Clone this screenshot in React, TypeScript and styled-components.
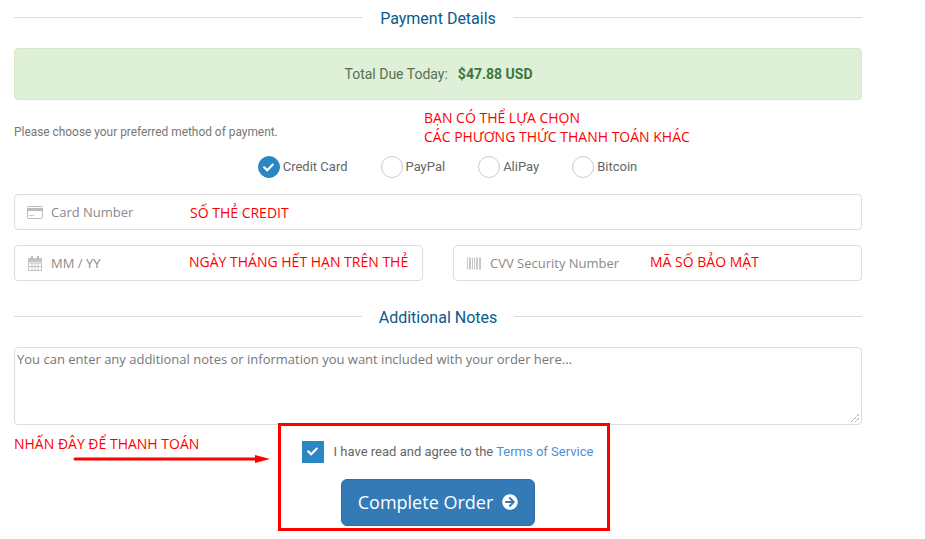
import styled, { createGlobalStyle } from "styled-components"
import { FaArrowCircleRight, FaCheck } from "react-icons/fa"

const GlobalStyle = createGlobalStyle`
    html, body {
        margin: 0;
        padding: 0;
        background: #fff;
        overflow: hidden;
    }
`
const Page = styled.div`
    position: relative;
    width: 925px;
    height: 539px;
    padding: 7px 0 0 14px;
    box-sizing: border-box;
    font-family: Roboto, "Liberation Sans", sans-serif;
    color: #777;
`
const Column = styled.div`
    width: 848px;
`
const SubHeading = styled.div<{ $mt?: number }>`
    display: flex;
    align-items: center;
    gap: 17px;
    height: 21px;
    margin-top: ${(p) => p.$mt ?? 0}px;
    font-size: 16px;
    color: #0a5a8c;
    &::before, &::after {
        content: "";
        flex: 1;
        height: 1px;
        background: #ddd;
    }
    span {
        padding-top: 2px;
    }
`
const TotalDue = styled.div`
    display: flex;
    justify-content: center;
    align-items: center;
    gap: 10px;
    height: 52px;
    margin-top: 20px;
    padding-left: 1px;
    box-sizing: border-box;
    background: #dff0d8;
    border: 1px solid #d6e9c6;
    border-radius: 4px;
    font-size: 14px;
    color: #56714f;
    b {
        color: #3c763d;
    }
`
const Hint = styled.p`
    margin: 25px 0 0;
    font-size: 11.9px;
    line-height: 14px;
    color: #777;
`
const Methods = styled.div`
    display: flex;
    justify-content: center;
    gap: 33px;
    margin: 17px 0 0 19px;
    height: 22px;
`
const Method = styled.label`
    display: flex;
    align-items: flex-start;
    gap: 3px;
    font-size: 13px;
    line-height: 22px;
    color: #666;
`
const Radio = styled.span<{ $on?: boolean }>`
    display: flex;
    align-items: center;
    justify-content: center;
    width: 22px;
    height: 22px;
    box-sizing: border-box;
    border-radius: 50%;
    border: 1px solid ${(p) => (p.$on ? "#2a87c4" : "#ccc")};
    background: ${(p) => (p.$on ? "#2a87c4" : "#fff")};
    color: #fff;
    font-size: 11px;
`
const Field = styled.div`
    display: flex;
    align-items: center;
    flex: 1;
    height: 36px;
    box-sizing: border-box;
    padding-left: 12px;
    border: 1px solid #ddd;
    border-radius: 4px;
    font-family: "Open Sans", sans-serif;
    font-size: 13px;
    color: #8a8a8a;
`
const FieldIcon = styled.svg`
    flex: none;
    width: 16px;
    height: 15px;
    margin-right: 8px;
`
const FieldRow = styled.div<{ $mt: number }>`
    display: flex;
    gap: 30px;
    margin-top: ${(p) => p.$mt}px;
`
const Notes = styled.div`
    position: relative;
    height: 78px;
    margin-top: 20px;
    box-sizing: border-box;
    padding: 2px 2px;
    border: 1px solid #ddd;
    border-radius: 4px;
    font-family: "Open Sans", sans-serif;
    font-size: 13px;
    line-height: 18px;
    color: #777;
`
const ResizeGrip = styled.svg`
    position: absolute;
    right: 1px;
    bottom: 1px;
`
const Highlight = styled.div`
    display: flex;
    flex-direction: column;
    align-items: center;
    width: 332px;
    height: 108px;
    box-sizing: border-box;
    margin: -2px 0 0 264px;
    padding-top: 14px;
    position: relative;
    border: 3px solid #f00;
`
const Agree = styled.div`
    display: flex;
    align-items: center;
    gap: 10px;
    height: 23px;
    margin-left: 7px;
    font-size: 13px;
    color: #666;
    a {
        color: #4a90d9;
    }
`
const Tick = styled.span`
    display: flex;
    align-items: center;
    justify-content: center;
    width: 22px;
    height: 22px;
    background: #2a87c4;
    color: #fff;
    font-size: 11px;
`
const OrderButton = styled.button`
    display: flex;
    align-items: center;
    justify-content: center;
    gap: 9px;
    width: 194px;
    height: 47px;
    margin: 16px 0 0 -12px;
    padding: 0 0 2px;
    background: #337ab7;
    border: 1px solid #2e6da4;
    border-radius: 6px;
    color: #fff;
    font-family: "Open Sans", sans-serif;
    font-size: 18px;
`
const Note = styled.div<{ $x: number; $y: number }>`
    position: absolute;
    left: ${(p) => p.$x}px;
    top: ${(p) => p.$y}px;
    font-family: "Open Sans", sans-serif;
    font-size: 14px;
    line-height: 19px;
    white-space: nowrap;
    color: #f00;
`
const Arrow = styled.svg`
    position: absolute;
    left: 72px;
    top: 452px;
`

export default function App() {
    return (
        <Page>
            <GlobalStyle />
            <Column>
                <SubHeading><span>Payment Details</span></SubHeading>
                <TotalDue>
                    <span>Total Due Today:</span>
                    <b>$47.88 USD</b>
                </TotalDue>
                <Hint>Please choose your preferred method of payment.</Hint>
                <Methods>
                    <Method><Radio $on><FaCheck /></Radio>Credit Card</Method>
                    <Method><Radio />PayPal</Method>
                    <Method><Radio />AliPay</Method>
                    <Method><Radio />Bitcoin</Method>
                </Methods>
                <FieldRow $mt={16}>
                    <Field>
                        <FieldIcon viewBox="0 0 16 15">
                            <rect x="0.5" y="1.5" width="15" height="12" rx="1" fill="#fff" stroke="#bbb" />
                            <rect x="1" y="3" width="14" height="3" fill="#bbb" />
                            <rect x="2" y="10" width="5" height="1" fill="#ccc" />
                        </FieldIcon>
                        Card Number
                    </Field>
                </FieldRow>
                <FieldRow $mt={15}>
                    <Field>
                        <FieldIcon viewBox="0 0 16 15">
                            <path d="M1.5 3.5h13v11h-13zM1.5 7h13M1.5 10.5h13M5 7v7.5M8 7v7.5M11 7v7.5" fill="none" stroke="#c4c4c4" />
                            <rect x="1" y="2" width="14" height="4" fill="#c4c4c4" />
                            <rect x="4" y="0" width="2" height="4" fill="#bbb" />
                            <rect x="10" y="0" width="2" height="4" fill="#bbb" />
                        </FieldIcon>
                        MM / YY
                    </Field>
                    <Field>
                        <FieldIcon viewBox="0 0 16 15">
                            <path d="M1 1.5h1v12H1zM3 1.5h2v12H3zM6 1.5h1v12H6zM8 1.5h1v12H8zM10 1.5h2v12h-2zM13 1.5h2v12h-2z" fill="#c8c8c8" />
                        </FieldIcon>
                        CVV Security Number
                    </Field>
                </FieldRow>
                <SubHeading $mt={25}><span>Additional Notes</span></SubHeading>
                <Notes>
                    You can enter any additional notes or information you want included with your order here...
                    <ResizeGrip width="10" height="10" viewBox="0 0 10 10">
                        <path d="M9 1 1 9M9 5 5 9" stroke="#666" strokeWidth="1" strokeDasharray="1 1" />
                    </ResizeGrip>
                </Notes>
                <Highlight>
                    <Agree>
                        <Tick><FaCheck /></Tick>
                        <span>I have read and agree to the <a>Terms of Service</a></span>
                    </Agree>
                    <OrderButton>Complete Order <FaArrowCircleRight size={16} /></OrderButton>
                </Highlight>
            </Column>
            <Note $x={424} $y={108}>BẠN CÓ THỂ LỰA CHỌN<br />CÁC PHƯƠNG THỨC THANH TOÁN KHÁC</Note>
            <Note $x={190} $y={203}>SỐ THẺ CREDIT</Note>
            <Note $x={189} $y={252}>NGÀY THÁNG HẾT HẠN TRÊN THẺ</Note>
            <Note $x={650} $y={252}>MÃ SỐ BẢO MẬT</Note>
            <Note $x={14} $y={434}>NHẤN ĐÂY ĐỂ THANH TOÁN</Note>
            <Arrow width="200" height="14" viewBox="0 0 200 14">
                <path d="M3 7H186" stroke="#f00" strokeWidth="3" strokeLinecap="round" />
                <path d="M183 3 198 7 183 11Z" fill="#f00" />
            </Arrow>
        </Page>
    )
}
